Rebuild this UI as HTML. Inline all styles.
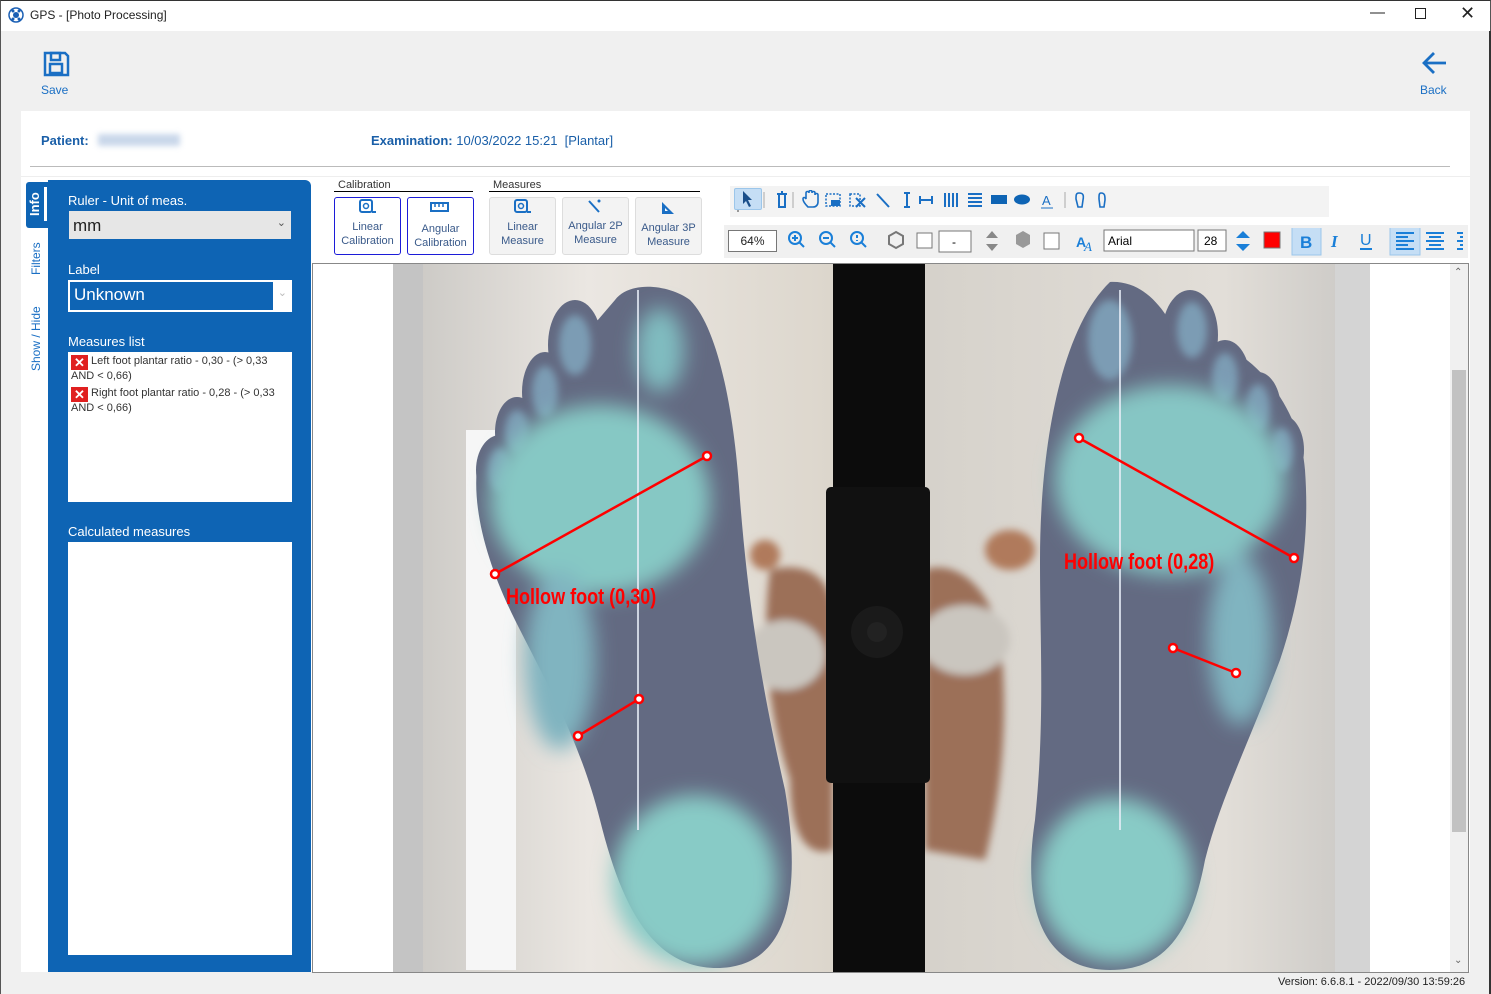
<!DOCTYPE html>
<html><head><meta charset="utf-8"><style>
*{box-sizing:border-box;margin:0;padding:0}
body{width:1491px;height:994px;overflow:hidden;background:#f0f0f0;font-family:"Liberation Sans",sans-serif;position:relative;color:#222}
.a{position:absolute}
.blue{color:#1a6fc4}
.tb{background:#fff;border:1px solid #1c1cd8;border-radius:3px;font-size:11px;color:#3a5a8a;text-align:center;line-height:14px}
.tg{background:#f3f3f3;border:1px solid #ddd;border-radius:3px;font-size:11px;color:#3a5a8a;text-align:center;line-height:14px}
</style></head><body>
<div class="a" style="left:0;top:0;width:1491px;height:31px;background:#fff;border-top:1px solid #333;border-left:1px solid #555;border-right:1px solid #555"></div>
<svg class="a" style="left:8px;top:7px" width="16" height="16"><circle cx="8" cy="8" r="7" fill="none" stroke="#1a5fb4" stroke-width="1.5"/><circle cx="8" cy="8" r="3" fill="#1a5fb4"/><circle cx="5" cy="4" r="1.5" fill="#1a5fb4"/><circle cx="11" cy="4" r="1.5" fill="#1a5fb4"/><circle cx="5" cy="12" r="1.5" fill="#1a5fb4"/><circle cx="11" cy="12" r="1.5" fill="#1a5fb4"/></svg>
<div class="a" style="left:30px;top:8px;font-size:12px">GPS - [Photo Processing]</div>
<div class="a" style="left:1370px;top:4px;font-size:15px">&#8212;</div>
<div class="a" style="left:1415px;top:8px;width:11px;height:11px;border:1px solid #222"></div>
<div class="a" style="left:1460px;top:3px;font-size:18px">&#10005;</div>
<div class="a" style="left:1489px;top:31px;width:2px;height:963px;background:#333"></div>
<div class="a" style="left:0;top:31px;width:1px;height:963px;background:#555"></div>

<svg class="a" style="left:42px;top:50px" width="28" height="28" viewBox="0 0 28 28"><path d="M3 3h20l3 3v19H3z" fill="none" stroke="#1a6fc4" stroke-width="2.5"/><rect x="9" y="3" width="9" height="7" fill="none" stroke="#1a6fc4" stroke-width="2.5"/><rect x="8" y="14" width="12" height="9" fill="none" stroke="#1a6fc4" stroke-width="2.5"/></svg>
<div class="a blue" style="left:41px;top:83px;font-size:12px">Save</div>
<svg class="a" style="left:1421px;top:51px" width="28" height="24"><path d="M3 12h22M13 2L3 12l10 10" fill="none" stroke="#1a6fc4" stroke-width="2.8"/></svg>
<div class="a blue" style="left:1420px;top:83px;font-size:12px">Back</div>

<div class="a" style="left:21px;top:111px;width:1449px;height:861px;background:#fff"></div>
<div class="a" style="left:41px;top:133px;font-size:13px;font-weight:bold;color:#1a5fa8">Patient:</div>
<div class="a" style="left:98px;top:134px;width:82px;height:12px;background:#c9d7ea;filter:blur(3px)"></div>
<div class="a" style="left:371px;top:133px;font-size:13px;color:#1a5fa8"><b>Examination:</b> 10/03/2022 15:21&nbsp; [Plantar]</div>
<div class="a" style="left:30px;top:166px;width:1420px;height:1px;background:#bbb"></div>
<div class="a" style="left:21px;top:176px;width:1449px;height:1px;background:#eee"></div>

<div class="a" style="left:26px;top:182px;width:22px;height:46px;background:#0e64b4;border-radius:3px 0 0 3px"></div>
<div class="a" style="left:44px;top:187px;width:3px;height:34px;background:#fff"></div>
<div class="a" style="left:27px;top:216px;transform:rotate(-90deg);transform-origin:0 0;font-size:13px;font-weight:bold;color:#fff">Info</div>
<div class="a blue" style="left:29px;top:275px;transform:rotate(-90deg);transform-origin:0 0;font-size:12px">Filters</div>
<div class="a blue" style="left:29px;top:371px;transform:rotate(-90deg);transform-origin:0 0;font-size:12px">Show / Hide</div>

<div class="a" style="left:48px;top:180px;width:263px;height:792px;background:#0e64b4;border-radius:0 6px 0 0"></div>
<div class="a" style="left:68px;top:193px;font-size:13px;color:#fff">Ruler - Unit of meas.</div>
<div class="a" style="left:69px;top:211px;width:222px;height:28px;background:#e6e6e6;font-size:17px;padding:5px 4px">mm<span style="position:absolute;right:5px;top:5px;font-size:11px;color:#555">&#8964;</span></div>
<div class="a" style="left:68px;top:262px;font-size:13px;color:#fff">Label</div>
<div class="a" style="left:68px;top:280px;width:224px;height:32px;background:#fff;padding:2px"><div style="width:203px;height:28px;background:#0e64b4;color:#fff;font-size:17px;padding:3px 4px">Unknown</div><span style="position:absolute;right:5px;top:6px;font-size:11px;color:#bbb">&#8964;</span></div>
<div class="a" style="left:68px;top:334px;font-size:13px;color:#fff">Measures list</div>
<div class="a" style="left:68px;top:352px;width:224px;height:150px;background:#fff;font-size:11px;color:#333;padding:3px;line-height:13px">
<div><span style="display:inline-block;width:17px;height:15px;background:#e02020;color:#fff;font-size:13px;text-align:center;vertical-align:-3px;line-height:15px;font-weight:bold">&#10005;</span> Left foot plantar ratio - 0,30 - (&gt; 0,33 AND &lt; 0,66)</div>
<div style="margin-top:4px"><span style="display:inline-block;width:17px;height:15px;background:#e02020;color:#fff;font-size:13px;text-align:center;vertical-align:-3px;line-height:15px;font-weight:bold">&#10005;</span> Right foot plantar ratio - 0,28 - (&gt; 0,33 AND &lt; 0,66)</div></div>
<div class="a" style="left:68px;top:524px;font-size:13px;color:#fff">Calculated measures</div>
<div class="a" style="left:68px;top:542px;width:224px;height:413px;background:#fff"></div>

<div class="a" style="left:338px;top:179px;font-size:11px;color:#333">Calibration</div>
<div class="a" style="left:334px;top:191px;width:139px;height:1px;background:#000"></div>
<div class="a" style="left:493px;top:179px;font-size:11px;color:#333">Measures</div>
<div class="a" style="left:489px;top:191px;width:211px;height:1px;background:#000"></div>
<div class="a tb" style="left:334px;top:197px;width:67px;height:58px;padding-top:22px">Linear<br>Calibration</div>
<div class="a tb" style="left:407px;top:197px;width:67px;height:58px;padding-top:24px">Angular<br>Calibration</div>
<div class="a tg" style="left:489px;top:197px;width:67px;height:58px;padding-top:22px">Linear<br>Measure</div>
<div class="a tg" style="left:562px;top:197px;width:67px;height:58px;padding-top:21px">Angular 2P<br>Measure</div>
<div class="a tg" style="left:635px;top:197px;width:67px;height:58px;padding-top:23px">Angular 3P<br>Measure</div>
<svg class="a" style="left:358px;top:199px" width="20" height="16"><rect x="2" y="1" width="12" height="12" rx="2" fill="none" stroke="#1a6fc4" stroke-width="2"/><circle cx="8" cy="7" r="2.5" fill="none" stroke="#1a6fc4" stroke-width="1.5"/><path d="M14 13h4" stroke="#1a6fc4" stroke-width="2"/></svg>
<svg class="a" style="left:430px;top:201px" width="20" height="12"><rect x="1" y="2" width="17" height="8" fill="none" stroke="#1a6fc4" stroke-width="2"/><path d="M5 2v4M9 2v4M13 2v4" stroke="#1a6fc4" stroke-width="1.5"/></svg>
<svg class="a" style="left:513px;top:199px" width="20" height="16"><rect x="2" y="1" width="12" height="12" rx="2" fill="none" stroke="#1a6fc4" stroke-width="2"/><circle cx="8" cy="7" r="2.5" fill="none" stroke="#1a6fc4" stroke-width="1.5"/><path d="M14 13h4" stroke="#1a6fc4" stroke-width="2"/></svg>
<svg class="a" style="left:586px;top:198px" width="18" height="16"><path d="M3 3l10 11" stroke="#1a6fc4" stroke-width="2"/><circle cx="13" cy="3" r="1.5" fill="#1a6fc4"/></svg>
<svg class="a" style="left:660px;top:201px" width="16" height="14"><path d="M2 1v12h12z" fill="#1a6fc4"/><path d="M5 7v3h3z" fill="#fff"/></svg>

<div class="a" style="left:730px;top:186px;width:599px;height:31px;background:#f3f3f3"></div>
<div class="a" style="left:737px;top:190px;width:3px;height:22px;border-left:2px dotted #999"></div>
<div class="a" style="left:734px;top:188px;width:28px;height:22px;background:#c5def5;border:1px solid #9cc6ea;border-radius:2px"></div>
<svg class="a" style="left:740px;top:190px" width="380" height="20">
<path d="M3 1l9 9h-4l3 6-2 1-3-6-3 3z" fill="#1a4f8a"/>
<path d="M24 2v16" stroke="#aaa"/>
<path d="M37 4h10M39 4v13h6V4M43 2h-2" stroke="#1a6fc4" stroke-width="2" fill="none"/>
<path d="M53 2v16" stroke="#aaa"/>
<path d="M68 17c-3-3-5-6-5-8 0-2 2-2 3 0V3c0-2 3-2 3 0V2c0-2 3-2 3 0v1c0-2 3-2 3 0v2c0-2 3-2 3 0v7c0 3-2 5-5 5z" fill="none" stroke="#1a6fc4" stroke-width="1.6"/>
<rect x="86" y="4" width="14" height="12" fill="none" stroke="#1a6fc4" stroke-dasharray="2 1.5" stroke-width="1.5"/><rect x="91" y="10" width="9" height="6" fill="#1a6fc4"/>
<rect x="110" y="4" width="10" height="12" fill="none" stroke="#1a6fc4" stroke-dasharray="2 1.5" stroke-width="1.5"/><path d="M116 8l9 9M125 8l-9 9" stroke="#1a6fc4" stroke-width="2"/>
<path d="M137 4l12 13M167 3v14M164 3h6M164 17h6M180 6v8M192 6v8M180 10h12M205 3v14M209 3v14M213 3v14M217 3v14M228 4h14M228 8h14M228 12h14M228 16h14" stroke="#1a6fc4" stroke-width="2"/>
<rect x="251" y="5" width="16" height="9" fill="#0e64b4"/><ellipse cx="282" cy="9.5" rx="8" ry="5" fill="#0e64b4"/>
<text x="302" y="15" font-size="13" fill="#1a6fc4" font-family="Liberation Sans">A</text><path d="M301 18h12" stroke="#1a6fc4"/>
<path d="M325 2v16" stroke="#aaa"/>
<path d="M339 3c4 0 5 2 4 7l-1 7h-4l-2-8c0-4 0-6 3-6z" fill="none" stroke="#1a6fc4" stroke-width="1.6"/>
<path d="M361 3c4 0 4 3 4 7l-1 7h-4l-1-8c0-4 0-6 2-6z" fill="none" stroke="#1a6fc4" stroke-width="1.6"/>
</svg>

<div class="a" style="left:724px;top:225px;width:744px;height:33px;background:#f0f0f0"></div>
<div class="a" style="left:728px;top:230px;width:49px;height:22px;border:1px solid #777;background:#fff;font-size:12px;text-align:center;line-height:20px">64%</div>
<svg class="a" style="left:784px;top:228px" width="700" height="28">
<g stroke="#1a7fd8" stroke-width="2" fill="none"><circle cx="11" cy="10" r="6"/><path d="M15 14l5 5M8 10h6M11 7v6"/><circle cx="42" cy="10" r="6"/><path d="M46 14l5 5M39 10h6"/><circle cx="73" cy="10" r="6"/><path d="M77 14l5 5M73 7v3M73 12v1"/></g>
<path d="M112 4l7 4v8l-7 4-7-4V8z" fill="none" stroke="#777" stroke-width="2"/>
<rect x="133" y="5" width="15" height="15" fill="#fff" stroke="#777"/>
<rect x="155" y="3" width="32" height="21" fill="#fff" stroke="#777"/><text x="168" y="18" font-size="12" font-family="Liberation Sans">-</text>
<path d="M202 10l6-7 6 7zM202 16l6 7 6-7z" fill="#888"/>
<path d="M239 3l7 4v9l-7 4-7-4V7z" fill="#999"/>
<rect x="260" y="5" width="15" height="16" fill="#fff" stroke="#777"/>
<text x="292" y="19" font-size="14" font-weight="bold" fill="#1a7fd8" font-family="Liberation Sans">A</text><text x="300" y="23" font-size="13" font-style="italic" fill="#1a7fd8" font-family="Liberation Serif">A</text>
<rect x="320" y="2" width="90" height="21" fill="#fff" stroke="#777"/><text x="324" y="17" font-size="12" font-family="Liberation Sans">Arial</text>
<rect x="414" y="2" width="28" height="21" fill="#fff" stroke="#777"/><text x="420" y="17" font-size="12" font-family="Liberation Sans">28</text>
<path d="M452 10l7-7 7 7zM452 16l7 7 7-7z" fill="#1a7fd8"/>
<rect x="480" y="4" width="16" height="16" fill="#f00" stroke="#777"/>
<rect x="508" y="-1" width="29" height="28" fill="#c5def5" stroke="#9cc6ea"/><text x="516" y="20" font-size="17" font-weight="bold" fill="#1a7fd8" font-family="Liberation Sans">B</text>
<text x="547" y="19" font-size="17" font-weight="bold" font-style="italic" fill="#1a7fd8" font-family="Liberation Serif">I</text>
<text x="576" y="17" font-size="16" fill="#1a7fd8" font-family="Liberation Sans">U</text><path d="M576 21h12" stroke="#1a7fd8" stroke-width="2"/>
<rect x="606" y="-1" width="30" height="28" fill="#c5def5" stroke="#9cc6ea"/>
<path d="M612 5h18M612 9h12M612 13h18M612 17h12M612 21h18M642 5h18M645 9h12M642 13h18M645 17h12M642 21h18M673 5h6M676 9h3M673 13h6M676 17h3M673 21h6" stroke="#1a7fd8" stroke-width="2"/>
</svg>

<div class="a" style="left:312px;top:263px;width:1157px;height:710px;border:1px solid #888;background:#fff"></div>
<div class="a" style="left:1450px;top:264px;width:18px;height:708px;background:#f0f0f0"></div>
<div class="a" style="left:1452px;top:370px;width:14px;height:462px;background:#c2c2c2"></div>
<div class="a" style="left:1454px;top:267px;font-size:10px;color:#666">&#8963;</div>
<div class="a" style="left:1454px;top:955px;font-size:10px;color:#666">&#8964;</div>
<svg class="a" style="left:313px;top:264px" width="1137" height="708" viewBox="313 264 1137 708">
<defs>
<filter id="b"><feGaussianBlur stdDeviation="10"/></filter>
<filter id="b2"><feGaussianBlur stdDeviation="4"/></filter>
<linearGradient id="bg" x1="0" x2="1"><stop offset="0" stop-color="#c8c6c2"/><stop offset="0.2" stop-color="#ebe7e2"/><stop offset="0.45" stop-color="#dcd6cc"/><stop offset="0.55" stop-color="#d6d2cb"/><stop offset="0.85" stop-color="#e2ded8"/><stop offset="1" stop-color="#c9c7c4"/></linearGradient>
</defs>
<rect x="313" y="264" width="80" height="708" fill="#fff"/>
<rect x="1370" y="264" width="80" height="708" fill="#fff"/>
<rect x="393" y="264" width="977" height="708" fill="url(#bg)"/>
<rect x="393" y="264" width="30" height="708" fill="#c4c4c4"/>
<rect x="466" y="430" width="50" height="540" fill="#f6f6f6"/>
<rect x="1335" y="264" width="35" height="708" fill="#d4d4d4"/>
<!-- legs -->
<g filter="url(#b2)">
<path d="M770 570 C810 560 830 580 833 610 L833 850 C800 860 790 820 790 780 C770 720 760 650 770 570Z" fill="#9c7058"/>
<path d="M925 570 C950 560 990 580 1000 640 C1010 720 1000 800 985 860 L925 850 Z" fill="#9c7058"/>
<ellipse cx="785" cy="655" rx="40" ry="35" fill="#cac6bf"/>
<ellipse cx="965" cy="640" rx="45" ry="35" fill="#cac6bf"/>
<ellipse cx="765" cy="555" rx="15" ry="15" fill="#b07a5c"/>
<ellipse cx="1010" cy="550" rx="25" ry="20" fill="#b07a5c"/>
</g>
<rect x="833" y="264" width="92" height="708" fill="#0c0c0c"/>
<rect x="826" y="487" width="104" height="296" rx="5" fill="#111"/>
<circle cx="877" cy="632" r="26" fill="#1a1a1a"/>
<circle cx="877" cy="632" r="10" fill="#222"/>
<!-- left foot -->
<g fill="#636a82">
<path d="M615 300 C630 280 670 285 690 300 C720 330 735 420 740 500 C748 600 760 680 785 790 C800 880 795 965 720 968 C650 970 620 900 600 820 C580 740 545 680 515 620 C490 570 470 510 478 460 Z"/>
<ellipse cx="655" cy="350" rx="38" ry="62"/>
<ellipse cx="575" cy="345" rx="27" ry="45"/>
<ellipse cx="545" cy="392" rx="23" ry="40"/>
<ellipse cx="517" cy="432" rx="22" ry="35"/>
<ellipse cx="500" cy="470" rx="24" ry="35"/>
</g>
<g filter="url(#b2)" fill="#7c9cb4">
<ellipse cx="575" cy="345" rx="16" ry="30"/><ellipse cx="545" cy="392" rx="13" ry="26"/><ellipse cx="517" cy="432" rx="12" ry="22"/><ellipse cx="500" cy="470" rx="12" ry="22"/>
</g>
<g filter="url(#b)">
<ellipse cx="600" cy="500" rx="110" ry="95" fill="#86c8c4"/>
<ellipse cx="660" cy="350" rx="24" ry="42" fill="#80bcc0"/>
<ellipse cx="695" cy="880" rx="82" ry="85" fill="#88cbc6"/>
<ellipse cx="560" cy="660" rx="35" ry="90" fill="#80b4c0"/>
</g>
<!-- right foot -->
<g fill="#636a82">
<path d="M1110 282 C1150 280 1170 320 1180 340 C1240 330 1300 400 1305 470 C1310 540 1300 600 1280 660 C1250 740 1220 800 1205 860 C1190 940 1160 970 1110 970 C1050 970 1020 920 1035 820 C1045 720 1040 650 1040 560 C1040 450 1060 330 1110 282 Z"/>
<ellipse cx="1190" cy="335" rx="28" ry="45"/>
<ellipse cx="1225" cy="380" rx="25" ry="40"/>
<ellipse cx="1258" cy="410" rx="23" ry="38"/>
<ellipse cx="1282" cy="450" rx="22" ry="35"/>
</g>
<g filter="url(#b2)" fill="#7c9cb4">
<ellipse cx="1110" cy="340" rx="22" ry="40"/><ellipse cx="1192" cy="330" rx="15" ry="28"/><ellipse cx="1225" cy="378" rx="13" ry="25"/><ellipse cx="1258" cy="408" rx="12" ry="24"/><ellipse cx="1282" cy="450" rx="11" ry="22"/>
</g>
<g filter="url(#b)">
<ellipse cx="1170" cy="480" rx="115" ry="95" fill="#86c6c4"/>
<ellipse cx="1115" cy="880" rx="78" ry="82" fill="#88cbc6"/>
<ellipse cx="1240" cy="640" rx="32" ry="85" fill="#80b4c0"/>
</g>
<path d="M638 290v540M1120 290v540" stroke="#e8eef8" stroke-width="2" opacity="0.8"/>
<g stroke="#f00" stroke-width="2.5" fill="#fff">
<path d="M495 574L707 456M578 736L639 699M1079 438L1294 558M1173 648L1236 673"/>
<circle cx="495" cy="574" r="4"/><circle cx="707" cy="456" r="4"/><circle cx="578" cy="736" r="4"/><circle cx="639" cy="699" r="4"/>
<circle cx="1079" cy="438" r="4"/><circle cx="1294" cy="558" r="4"/><circle cx="1173" cy="648" r="4"/><circle cx="1236" cy="673" r="4"/>
</g>
<text x="506" y="604" font-size="22" fill="#f00" font-weight="bold" font-family="Liberation Sans" transform="translate(506 604) scale(0.82 1) translate(-506 -604)">Hollow foot (0,30)</text>
<text x="1064" y="569" font-size="22" fill="#f00" font-weight="bold" font-family="Liberation Sans" transform="translate(1064 569) scale(0.82 1) translate(-1064 -569)">Hollow foot (0,28)</text>
</svg>

<div class="a" style="left:1278px;top:976px;font-size:11px;color:#222">Version: 6.6.8.1 - 2022/09/30 13:59:26</div>
</body></html>
